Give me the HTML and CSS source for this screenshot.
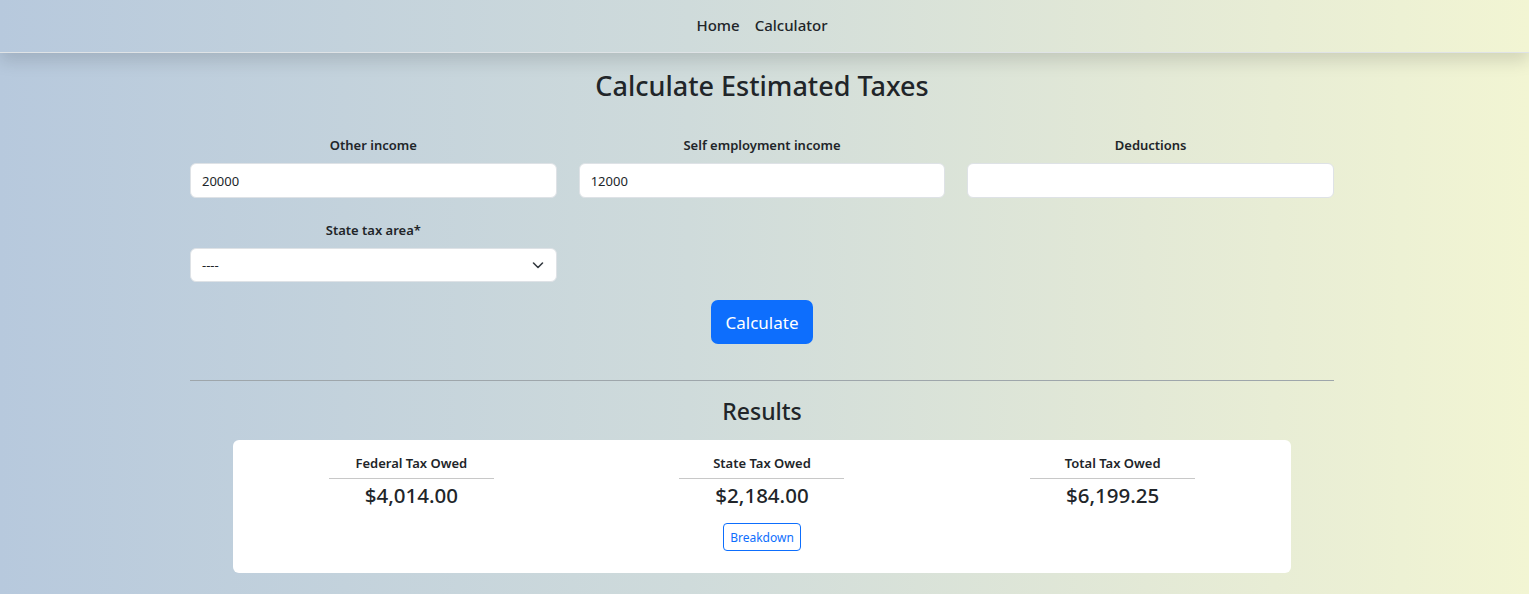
FILE: index.html
```html
<!DOCTYPE html>
<html lang="en">
<head>
<meta charset="utf-8">
<title>Calculate Estimated Taxes</title>
<link rel="stylesheet" href="styles.css">
</head>
<body>
<nav class="topnav">
  <a class="nav-link" href="#">Home</a>
  <a class="nav-link" href="#">Calculator</a>
</nav>
<main class="page">
  <h1 class="title">Calculate Estimated Taxes</h1>
  <form class="form">
    <div class="field">
      <label class="label">Other income</label>
      <input class="input" type="text" value="20000">
    </div>
    <div class="field">
      <label class="label">Self employment income</label>
      <input class="input" type="text" value="12000">
    </div>
    <div class="field">
      <label class="label">Deductions</label>
      <input class="input" type="text" value="">
    </div>
    <div class="field">
      <label class="label">State tax area*</label>
      <div class="select">
        <span class="select-value">----</span>
        <svg class="chevron" width="16" height="16" viewBox="0 0 16 16"><path d="M3.5 6l4.5 4.5L12.5 6" fill="none" stroke="#343a40" stroke-width="1.6" stroke-linecap="round" stroke-linejoin="round"/></svg>
      </div>
    </div>
  </form>
  <div class="actions"><button class="btn-primary" type="button">Calculate</button></div>
  <hr class="divider">
  <h2 class="results-title">Results</h2>
  <section class="card">
    <div class="result">
      <div class="result-label">Federal Tax Owed</div>
      <div class="result-value">$4,014.00</div>
    </div>
    <div class="result">
      <div class="result-label">State Tax Owed</div>
      <div class="result-value">$2,184.00</div>
      <button class="btn-outline" type="button">Breakdown</button>
    </div>
    <div class="result">
      <div class="result-label">Total Tax Owed</div>
      <div class="result-value">$6,199.25</div>
    </div>
  </section>
</main>
</body>
</html>
```

FILE: styles.css
```css
* { box-sizing: border-box; }
html, body { height: 100%; }
body {
  margin: 0;
  padding-right: 5px;
  font-family: "Noto Sans", "Open Sans", sans-serif;
  color: #212529;
  background: linear-gradient(90deg, #b7c9dd 0%, #cfdbdb 45%, #e3e9d6 75%, #f2f5d3 100%);
  overflow: hidden;
}
.topnav {
  height: 53px;
  display: flex;
  justify-content: center;
  align-items: center;
  gap: 15px;
  border-bottom: 1px solid #dfe3e6;
  box-shadow: 0 8px 16px rgba(0,0,0,0.13);
  padding-bottom: 2px;
  position: relative;
  margin-right: -5px;
  padding-right: 5px;
}
.nav-link {
  color: #212529;
  text-decoration: none;
  font-size: 15px;
  font-weight: 500;
}
.page {
  width: 1144px;
  margin: 0 auto;
  display: flex;
  flex-direction: column;
}
.title {
  margin: 14px 0 0;
  text-align: center;
  font-size: 27px;
  font-weight: 500;
  line-height: 38px;
}
.form {
  margin-top: 31px;
  display: grid;
  grid-template-columns: repeat(3, 1fr);
  column-gap: 22px;
  row-gap: 23px;
}
.field {
  display: flex;
  flex-direction: column;
}
.label {
  text-align: center;
  font-size: 13px;
  font-weight: 600;
  line-height: 18px;
  margin-bottom: 9px;
}
.input, .select {
  height: 35px;
  background: #fff;
  border: 1px solid #dee2e6;
  border-radius: 6px;
  padding: 0 11px;
  font-family: inherit;
  font-size: 13px;
  color: #212529;
}
.select {
  height: 34px;
  display: flex;
  align-items: center;
  justify-content: space-between;
  padding-right: 10px;
}
.chevron { display: block; }
.actions {
  display: flex;
  justify-content: center;
  margin-top: 18px;
}
.btn-primary {
  background: #0d6efd;
  color: #fff;
  border: 0;
  border-radius: 7px;
  width: 102px;
  height: 44px;
  font-family: inherit;
  font-size: 17px;
}
.divider {
  margin: 36px 0 0;
  border: 0;
  border-top: 1px solid #9ea6ab;
}
.results-title {
  margin: 14px 0 0;
  text-align: center;
  font-size: 23px;
  font-weight: 500;
  line-height: 32px;
}
.card {
  margin: 13px 43px 0;
  background: #fff;
  border-radius: 6px;
  height: 133px;
  display: grid;
  grid-template-columns: repeat(3, 1fr);
  padding: 14px 3px 0;
}
.result {
  display: flex;
  flex-direction: column;
  align-items: center;
}
.result-label {
  width: 165px;
  text-align: center;
  font-size: 13px;
  font-weight: 600;
  line-height: 18px;
  padding-bottom: 6px;
  border-bottom: 1px solid #c8c8c8;
}
.result-value {
  font-size: 20.5px;
  font-weight: 500;
  line-height: 30px;
  margin-top: 1px;
}
.btn-outline {
  margin-top: 13px;
  width: 78px;
  height: 28px;
  background: #fff;
  color: #0d6efd;
  border: 1px solid #0d6efd;
  border-radius: 4px;
  font-family: inherit;
  font-size: 12px;
  padding: 0;
}
```
